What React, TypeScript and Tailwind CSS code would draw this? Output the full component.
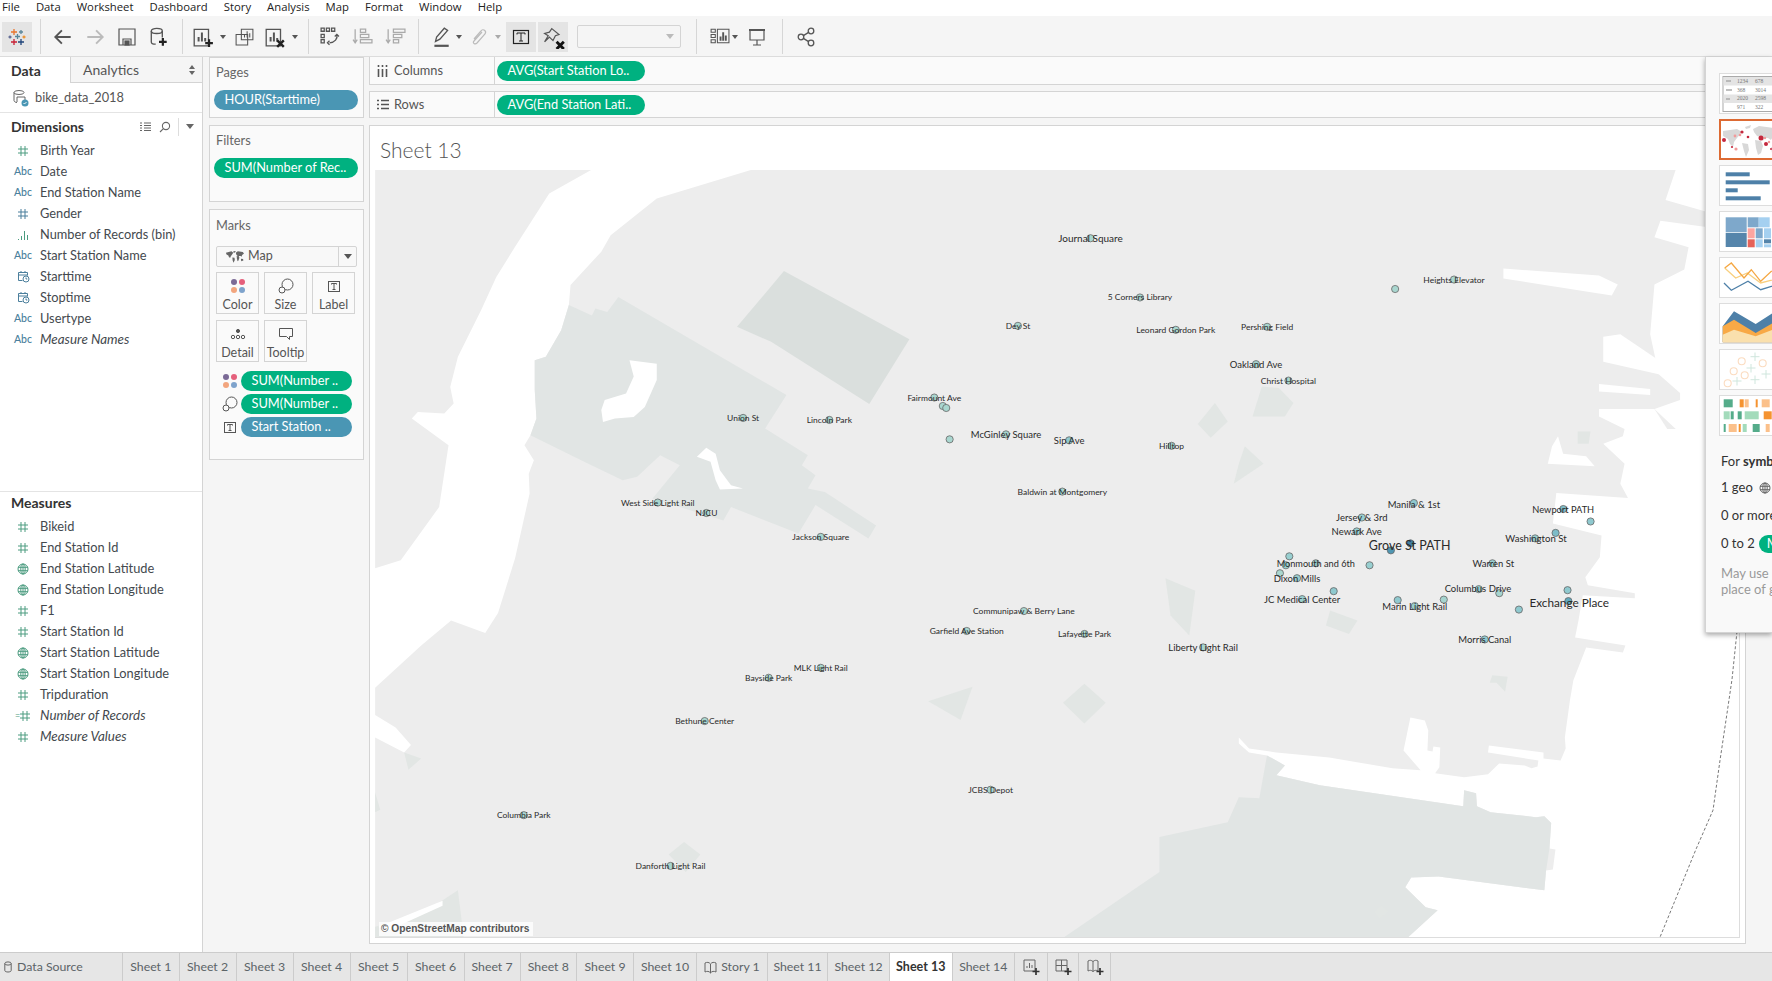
import React from "react";

const Z = (x: number) => -4 + x * 0.8547;
const Y = (y: number) => -6 + y * 0.4985;

const LAND = "6,9 260,9 210,57 170,164 148,225 130,292 103,385 94,446 98,479 87,499 56,496 49,509 92,563 81,687 36,794 6,810 6,1050 60,965 95,915 135,940 150,900 170,790 187,660 186,620 192,593 181,563 188,543 195,509 193,452 193,392 206,385 224,332 233,281 235,241 271,174 282,141 336,67 448,9 1530,9 1518,70 1568,95 1568,125 1512,112 1505,145 1545,165 1540,210 1505,240 1500,340 1510,420 1535,458 1535,472 1505,490 1530,530 1470,530 1468,545 1445,560 1470,600 1465,640 1474,669 1390,659 1386,720 1443,744 1441,788 1424,828 1427,844 1482,860 1482,870 1421,864 1416,915 1412,949 1471,965 1468,979 1425,969 1410,1035 1406,1075 1400,1150 1401,1172 1395,1196 1375,1192 1375,1180 1311,1166 1310,1180 1369,1196 1368,1208 1361,1212 1353,1206 1323,1202 1310,1224 1282,1230 1248,1222 1253,1210 1254,1170 1246,1168 1245,1178 1239,1176 1240,1136 1236,1116 1219,1110 1211,1176 1231,1216 1198,1212 1124,1190 1062,1180 1030,1172 1018,1150 1018,1162 1030,1180 1051,1186 1072,1206 1062,1226 1113,1246 1281,1288 1282,1256 1296,1262 1297,1288 1313,1300 1366,1310 1376,1308 1384,1322 1382,1373 1389,1375 1386,1415 1378,1417 1376,1457 1252,1429 1220,1431 1213,1451 1237,1491 1251,1497 1214,1555 6,1555 6,1150 40,1180 48,1165 30,1130 6,1105";
const SOUTH_PARK = "1051,1186 1072,1206 1062,1226 1113,1246 1281,1288 1282,1256 1296,1262 1297,1288 1313,1300 1366,1310 1376,1308 1384,1322 1382,1373 1378,1417 1376,1457 1252,1429 1220,1431 1213,1451 1237,1491 1251,1497 1214,1555 810,1555 925,1420 925,1350 1005,1320 1018,1270 1042,1272";
const BIG_PARK = "291,265 488,462 463,529 513,583 506,603 522,623 513,650 533,657 593,724 584,750 522,683 502,740 423,687 414,714 331,670 363,603 340,583 313,626 296,633 251,596 188,543 195,509 193,452 193,392 206,385 224,332 233,281 260,302 264,288 278,295";
const RAIL_PARK = "485,213 632,350 585,480 470,355 430,325";
const PARKS = [
  "1065,448 1082,478 1072,505 1034,505 1045,445",
  "990,478 1005,515 985,548 970,520",
  "1025,565 1047,600 1012,640 1018,600",
  "932,830 967,855 960,945 938,905",
  "1125,895 1157,915 1147,942 1120,925",
  "654,1077 706,1048 692,1115",
  "837,1042 862,1080 837,1122 812,1080",
  "1315,1025 1333,1028 1330,1058 1320,1040 1312,1040",
  "368,1360 387,1385 370,1420 350,1385",
  "40,1180 60,1192 45,1215",
  "1185,1488 1193,1500 1183,1513 1177,1500",
  "6,1260 12,1295 6,1300",
  "60,1505 103,1457 110,1555 6,1555 6,1530",
  "1415,535 1430,535 1428,560 1415,560",
];
const WATER = [
  "304,392 336,399 336,432 322,486 309,506 287,509 273,516 271,492 275,472 300,459 309,425",
  "394,568 405,580 410,613 423,643 437,650 410,652 405,633 399,596 383,586",
  "10,1530 85,1478 85,1488 18,1540",
  "1385,565 1392,545 1398,580 1425,585 1435,605 1380,600",
  "1328,208 1440,222 1462,240 1455,262 1328,228",
  "1445,345 1465,340 1530,415 1510,420 1445,395",
  "1440,440 1500,450 1500,462 1440,455",
  "1440,490 1505,490 1520,530 1470,530 1440,505",
];

const LABELS: [string, number, number, number][] = [
  ["Journal Square", 843, 149, 10],
  ["Heights Elevator", 1269, 232, 8.5],
  ["5 Corners Library", 901, 268, 8.5],
  ["Dey St", 758, 325, 8.5],
  ["Leonard Gordon Park", 943, 333, 8.5],
  ["Pershing Field", 1050, 327, 8.5],
  ["Oakland Ave", 1037, 402, 9.5],
  ["Christ Hospital", 1075, 435, 8.5],
  ["Fairmount Ave", 660, 469, 8.5],
  ["Union St", 436, 510, 8.5],
  ["Lincoln Park", 537, 514, 8.5],
  ["McGinley Square", 744, 543, 9.5],
  ["Sip Ave", 818, 555, 9.5],
  ["Hilltop", 938, 566, 8.5],
  ["Baldwin at Montgomery", 810, 658, 8.5],
  ["West Side Light Rail", 336, 680, 8.5],
  ["NJCU", 393, 701, 8.5],
  ["Jackson Square", 527, 749, 8.5],
  ["Manila & 1st", 1222, 684, 9.5],
  ["Jersey & 3rd", 1161, 710, 9.5],
  ["Newark Ave", 1155, 738, 9.5],
  ["Grove St PATH", 1217, 766, 12.5],
  ["Newport PATH", 1397, 693, 9.3],
  ["Washington St", 1365, 752, 9.6],
  ["Monmouth and 6th", 1107, 802, 9.2],
  ["Warren St", 1315, 802, 9.5],
  ["Dixon Mills", 1085, 832, 9.5],
  ["Columbus Drive", 1297, 852, 9.5],
  ["JC Medical Center", 1091, 874, 9.5],
  ["Marin Light Rail", 1223, 889, 9.5],
  ["Exchange Place", 1404, 880, 11.8],
  ["Communipaw & Berry Lane", 765, 898, 8.5],
  ["Garfield Ave Station", 698, 938, 8.5],
  ["Lafayette Park", 836, 944, 8.5],
  ["Liberty Light Rail", 975, 971, 9.5],
  ["Morris Canal", 1305, 955, 9.5],
  ["MLK Light Rail", 527, 1012, 8.5],
  ["Bayside Park", 466, 1032, 8.5],
  ["Bethune Center", 391, 1119, 8.5],
  ["JCBS Depot", 726, 1257, 8.5],
  ["Columbia Park", 179, 1308, 8.5],
  ["Danforth Light Rail", 351, 1410, 8.5],
];

const DOTS: [number, number, string][] = [
  [843,149,"#a9d6cf"],[1269,232,"#a9d6cf"],[1200,251,"#a9d6cf"],[901,268,"#a9d6cf"],[758,325,"#a9d6cf"],[943,333,"#a9d6cf"],[1050,327,"#a9d6cf"],[1037,402,"#a5d4cf"],[1075,435,"#a9d6cf"],[660,469,"#a9d6cf"],[670,486,"#a9d6cf"],[674,490,"#a9d6cf"],[678,553,"#a9d6cf"],[436,510,"#a9d6cf"],[537,514,"#a9d6cf"],[744,543,"#a5d4cf"],[818,555,"#8fc9cf"],[938,566,"#a9d6cf"],[810,658,"#a9d6cf"],[336,680,"#a9d6cf"],[393,701,"#a9d6cf"],[527,749,"#a9d6cf"],
  [1076,788,"#98cfd0"],[1072,806,"#98cfd0"],[1107,802,"#98cfd0"],[1065,822,"#a9d6cf"],[1085,832,"#98cfd0"],[1128,858,"#8fc9cf"],[1091,874,"#98cfd0"],[1170,806,"#98cfd0"],[1195,776,"#4f97b3"],[1218,762,"#3f7ea2"],[1155,738,"#98cfd0"],[1161,710,"#98cfd0"],[1222,681,"#8fc9cf"],[1203,876,"#8fc9cf"],[1223,888,"#98cfd0"],[1257,875,"#a5d4cf"],[1298,854,"#98cfd0"],[1322,862,"#a5d4cf"],[1345,895,"#8fc9cf"],[1402,856,"#8fc9cf"],[1403,878,"#5fa8bc"],[1314,802,"#98cfd0"],[1305,955,"#8fc9cf"],[1364,752,"#98cfd0"],[1388,741,"#7dbcc8"],[1429,718,"#8fc9cf"],[1397,693,"#7dbcc8"],
  [975,971,"#a9d6cf"],[836,944,"#a9d6cf"],[698,938,"#a9d6cf"],[765,898,"#a9d6cf"],[527,1012,"#a9d6cf"],[466,1032,"#a9d6cf"],[391,1119,"#a9d6cf"],[726,1257,"#a9d6cf"],[179,1308,"#a9d6cf"],[351,1410,"#a9d6cf"],
];

const Hash = ({ c = "#4c9c80" }: { c?: string }) => (
  <svg width="12" height="12" viewBox="0 0 12 12" fill="none" stroke={c} strokeWidth="1">
    <path d="M4 1v10M8 1v10M1 4h10M1 8h10" />
  </svg>
);
const Globe = ({ c = "#4c9c80" }: { c?: string }) => (
  <svg width="12" height="12" viewBox="0 0 12 12" fill="none" stroke={c} strokeWidth="1">
    <circle cx="6" cy="6" r="5" /><ellipse cx="6" cy="6" rx="2.2" ry="5" /><path d="M1 4.300h10M1 7.700h10M6 1v10" />
  </svg>
);
const Abc = () => <span className="text-[10.5px] font-medium text-[#4b7f9c] leading-none">Abc</span>;
const Cal = () => (
  <svg width="13" height="13" viewBox="0 0 13 13" fill="none" stroke="#4b7f9c" strokeWidth="1">
    <path d="M1.500 2.500h9v3M1.500 2.500v8h4M1.500 5h9M4 1v2M8 1v2" /><circle cx="9" cy="9" r="3" /><path d="M9 7.500V9h1.300" />
  </svg>
);
const Bins = () => (
  <svg width="13" height="12" viewBox="0 0 13 12" fill="none" stroke="#4c9c80" strokeWidth="1">
    <path d="M1.500 10v1M4.500 7v4M7.500 2v9M10.500 6v5" />
  </svg>
);
const CalcHash = () => (
  <span className="flex items-center"><span className="text-[9px] leading-none text-[#4c9c80] mr-[-1px]">=</span><Hash /></span>
);

const DIMS: [React.ReactNode, string, boolean?][] = [
  [<Hash />, "Birth Year"],
  [<Abc />, "Date"],
  [<Abc />, "End Station Name"],
  [<Hash c="#4b7f9c" />, "Gender"],
  [<Bins />, "Number of Records (bin)"],
  [<Abc />, "Start Station Name"],
  [<Cal />, "Starttime"],
  [<Cal />, "Stoptime"],
  [<Abc />, "Usertype"],
  [<Abc />, "Measure Names", true],
];
const MEAS: [React.ReactNode, string, boolean?][] = [
  [<Hash />, "Bikeid"],
  [<Hash />, "End Station Id"],
  [<Globe />, "End Station Latitude"],
  [<Globe />, "End Station Longitude"],
  [<Hash />, "F1"],
  [<Hash />, "Start Station Id"],
  [<Globe />, "Start Station Latitude"],
  [<Globe />, "Start Station Longitude"],
  [<Hash />, "Tripduration"],
  [<CalcHash />, "Number of Records", true],
  [<Hash />, "Measure Values", true],
];

const Field = ({ icon, name, italic }: { icon: React.ReactNode; name: string; italic?: boolean }) => (
  <div className="flex items-center h-[21px]">
    <div className="w-[40px] pl-[10px] pr-[4px] flex justify-center">{icon}</div>
    <span className={"text-[#44494e] whitespace-nowrap " + (italic ? "italic text-[13.4px]" : "text-[12.8px]")}>{name}</span>
  </div>
);

const Pill = ({ text, blue, w }: { text: string; blue?: boolean; w: string }) => (
  <div className={"h-[20px] rounded-full flex items-center pl-[10.5px] text-[12.8px] text-white whitespace-nowrap " + w + " " + (blue ? "bg-[#4a96b4]" : "bg-[#00b180]")}>{text}</div>
);

const Dots = () => (
  <svg width="16" height="16" viewBox="0 0 16 16">
    <circle cx="4" cy="4" r="3" fill="#7b6a96" /><circle cx="12" cy="4" r="3" fill="#e5607c" />
    <circle cx="4" cy="12" r="3" fill="#f2a57e" /><circle cx="12" cy="12" r="3" fill="#7ea3cc" />
  </svg>
);
const SizeIc = () => (
  <svg width="16" height="16" viewBox="0 0 16 16" fill="#fafafa" stroke="#555" strokeWidth="1">
    <circle cx="9.500" cy="6.500" r="5.500" /><circle cx="4" cy="12" r="3" />
  </svg>
);
const LabelIc = () => (
  <svg width="14" height="14" viewBox="0 0 14 14" fill="none" stroke="#555" strokeWidth="1">
    <rect x="1.500" y="2.500" width="11" height="10" /><path d="M4.500 5.500v-1h5v1M7 4.500v6M5.500 10.500h3" />
  </svg>
);
const DetailIc = () => (
  <svg width="16" height="14" viewBox="0 0 16 14" fill="none" stroke="#555" strokeWidth="1">
    <circle cx="8" cy="4" r="1.600" fill="#555" /><circle cx="3" cy="10" r="1.700" /><circle cx="8" cy="10" r="1.700" /><circle cx="13" cy="10" r="1.700" />
  </svg>
);
const TipIc = () => (
  <svg width="16" height="14" viewBox="0 0 16 14" fill="none" stroke="#555" strokeWidth="1">
    <path d="M1.500 1.500h13v8h-3v3l-3-3h-7z" />
  </svg>
);

const MarkBtn = ({ icon, label }: { icon: React.ReactNode; label: string }) => (
  <div className="w-[43px] h-[42px] border border-[#d4d4d4] flex flex-col items-center pt-[5px] justify-between pb-[2px]">
    <div className="h-[16px] flex items-center">{icon}</div>
    <span className="text-[12.5px] leading-none text-[#555]">{label}</span>
  </div>
);

const WorldMini = () => (
  <svg width="19" height="14" viewBox="0 0 62 41" fill="#666">
    <path d="M3 7l18-5 6 5-5 7-3 4-2 5-4-2-2-5-6-4zM24 22l7 1 1 7-4 9-3-7zM27 2l8-1-2 5-5 1zM36 6l6-4 16 2 4 5-6 5-2 6-3-3-5 0-1 4-3-4-3-1-3-5z" />
    <path d="M38 17l7 1 2 5-3 9-3 2-2-8z" /><path d="M52 26l7 1 1 5-7 2z" />
  </svg>
);

const Thumb = ({ children, sel }: { children: React.ReactNode; sel?: boolean }) => (
  <div className={"w-[66px] h-[41px] shrink-0 bg-white " + (sel ? "border-[2px] border-[#dd6a33]" : "border border-[#dddddd]")}>
    <svg width="66" height="41" viewBox="0 0 66 41" className="block">{children}</svg>
  </div>
);

const Sep = ({ ml }: { ml: string }) => <div className={"w-px h-[35px] bg-[#d6d6d6] shrink-0 " + ml} />;
const Caret = ({ w, c = "#555" }: { w: string; c?: string }) => (
  <div className={"flex justify-center shrink-0 " + w}>
    <svg width="6" height="4" viewBox="0 0 6 4"><path d="M0 0h6L3 4z" fill={c} /></svg>
  </div>
);
const Cell = ({ w, children, tile }: { w: string; children: React.ReactNode; tile?: boolean }) => (
  <div className={"h-[30px] flex items-center justify-center shrink-0 " + w + (tile ? " bg-[#e4e4e4]" : "")}>{children}</div>
);
const I = ({ children, size = 20, s = "#555", sw = 1.2 }: { children: React.ReactNode; size?: number; s?: string; sw?: number }) => (
  <svg width={size} height={size} viewBox="0 0 20 20" fill="none" stroke={s} strokeWidth={sw}>{children}</svg>
);
const PlusK = ({ x = 12, y = 12 }: { x?: number; y?: number }) => (
  <path d={`M${x + 3.5} ${y}v7M${x} ${y + 3.5}h7`} stroke="#222" strokeWidth="2" />
);

const Logo = () => (
  <svg width="20" height="20" viewBox="0 0 20 20" fill="none" strokeWidth="1.300">
    <path d="M7 2v6M4 5h6" stroke="#e8762d" /><path d="M14 3v4M12 5h4" stroke="#5b879b" />
    <path d="M7 12v6M4 15h6" stroke="#c72035" /><path d="M14 12v6M11 15h6" stroke="#1f447a" />
    <path d="M10.500 7v5M8 9.500h5" stroke="#59879b" /><path d="M3 8.500v3M1.500 10h3" stroke="#5b6591" /><path d="M17 8.500v3M15.500 10h3" stroke="#eb912b" />
  </svg>
);

const TABS: [string, string][] = [
  ["Sheet 1", "w-[56.5px]"],["Sheet 2", "w-[57px]"],["Sheet 3", "w-[57px]"],["Sheet 4", "w-[57px]"],["Sheet 5", "w-[57px]"],["Sheet 6", "w-[57px]"],["Sheet 7", "w-[56px]"],["Sheet 8", "w-[56.5px]"],["Sheet 9", "w-[57px]"],["Sheet 10", "w-[63px]"],
];
const TABS2: [string, string][] = [["Sheet 11", "w-[60px]"],["Sheet 12", "w-[62px]"]];

const Tab = ({ t, w, active }: { t: React.ReactNode; w: string; active?: boolean }) => (
  <div className={"h-full shrink-0 flex items-center justify-center whitespace-nowrap border-r border-[#cccccc] " + w + (active ? " bg-white font-bold text-[#333] text-[12.5px]" : " text-[#5c6468] text-[12.3px]")}>{t}</div>
);

export default function App() {
  return (
    <div className="relative w-[1772px] h-[981px] overflow-hidden flex flex-col bg-[#f5f5f5] font-['Lato','Open_Sans',sans-serif] text-[#555]">
      {/* Menu */}
      <div className="h-[16px] pb-[2px] bg-white flex items-center pl-[2px] gap-[16px] text-[11.3px] leading-none text-[#222] font-['Open_Sans',sans-serif] shrink-0">
        {["File","Data","Worksheet","Dashboard","Story","Analysis","Map","Format","Window","Help"].map((m) => <span key={m}>{m}</span>)}
      </div>

      {/* Toolbar */}
      <div className="h-[41px] shrink-0 flex items-center pl-[2px] pt-[1px] bg-[#f5f5f5] border-b border-[#dcdcdc]">
        <Cell w="w-[30px]" tile><Logo /></Cell>
        <Sep ml="ml-[8px]" />
        <Cell w="w-[32px] ml-[6px]"><I size={22} sw={1.7}><path d="M17 10H3M9 4l-6 6 6 6" /></I></Cell>
        <Cell w="w-[32px]"><I size={22} s="#bbb" sw={1.7}><path d="M3 10h14M11 4l6 6-6 6" /></I></Cell>
        <Cell w="w-[32px]"><I size={20}><path d="M2 2h16v16H2zM6 18v-6h8v6" /><rect x="8" y="14" width="4" height="4" fill="#555" /></I></Cell>
        <Cell w="w-[32px]"><I size={22}><ellipse cx="8" cy="4.500" rx="5" ry="2.300" /><path d="M3 4.500v10c0 1 1.500 2 4 2M13 4.500v6" /><PlusK x={10} y={11} /></I></Cell>
        <Sep ml="ml-[7px]" />
        <Cell w="w-[30px] ml-[5px]"><I size={22}><path d="M2 3h13v15H2z" /><path d="M6 14v-4M9 14V6M12 14v-3" strokeWidth="1.800" /><PlusK x={12} y={12} /></I></Cell>
        <Caret w="w-[10px]" />
        <Cell w="w-[30px] ml-px"><I size={21} sw={1}><path d="M7 3h11v10H7zM2 8h11v10H2z" fill="#f5f5f5" /><path d="M10 11V8M12.500 11V5M15 11V7" /></I></Cell>
        <Cell w="w-[30px] ml-[1px]"><I size={22}><path d="M2 3h13v15H2z" /><path d="M6 14v-4M9 14V6M12 14v-3" strokeWidth="1.800" /><path d="M12 13l6 6M18 13l-6 6" stroke="#222" strokeWidth="2.200" /></I></Cell>
        <Caret w="w-[10px]" />
        <Sep ml="ml-[8px]" />
        <Cell w="w-[30px] ml-[5px]"><I size={21}><path d="M2 2h3v3H2zM7 2h3v3H7zM12 2h3v3h-3zM2 8h3v3H2zM2 13h3v3H2z" /><path d="M17 8c1 4-2 8-7 8M10 14l-2 2 2 2M15 10l2-2 2 2" /></I></Cell>
        <Cell w="w-[30px] ml-[3px]"><I size={21} s="#aaa"><path d="M3 3v12M1 13l2 3 2-3" /><path d="M8 3h5v3H8zM8 8h8v3H8zM8 13h11v3H8z" /></I></Cell>
        <Cell w="w-[30px] ml-[3px]"><I size={21} s="#aaa"><path d="M3 3v12M1 13l2 3 2-3" /><path d="M8 3h11v3H8zM8 8h8v3H8zM8 13h5v3H8z" /></I></Cell>
        <Sep ml="ml-[8px]" />
        <Cell w="w-[30px] ml-[7px]"><I size={22}><path d="M5 14l1-4 7-8 3 2-7 8z" /><path d="M4 18h13" strokeWidth="2" /></I></Cell>
        <Caret w="w-[6px]" />
        <Cell w="w-[30px] ml-[1px]"><I size={20} s="#bbb"><path d="M14 5l-8 9c-2 2 1 4 3 2l8-9c2-3-2-6-4-3l-7 8" /></I></Cell>
        <Caret w="w-[10px]" c="#aaa" />
        <Cell w="w-[30px] ml-[3px]" tile><I size={20} sw={1} s="#222"><rect x="2.500" y="3.500" width="15" height="13" strokeWidth="1.200" /><path d="M6 7.500V6h8v1.500M10 6v8M8 14h4" /></I></Cell>
        <Cell w="w-[30px] ml-[2px]" tile><I size={24} sw={1}><path d="M9 3l6 5-3 1-2 4-3-3-4 4 3-5-3-2 4-1z" /><path d="M13 14l6 6M19 14l-6 6" stroke="#111" strokeWidth="2.400" /></I></Cell>
        <div className="w-[104px] h-[23px] ml-[9px] shrink-0 rounded-[2px] border border-[#d4d4d4] flex items-center justify-end pr-[6px]">
          <svg width="8" height="5" viewBox="0 0 8 5"><path d="M0 0h8L4 5z" fill="#bbb" /></svg>
        </div>
        <Sep ml="ml-[15px]" />
        <Cell w="w-[26px] ml-[9px]"><I size={21} sw={1}><path d="M2 3h4v3H2zM2 8h4v3H2zM2 13h4v3H2zM8 3h11v13H8z" /><path d="M11 14v-4M13.500 14V6M16 14V9" strokeWidth="1.800" /></I></Cell>
        <Caret w="w-[6px]" />
        <Cell w="w-[26px] ml-[6px]"><I size={20}><path d="M2 3h16" strokeWidth="2" /><path d="M3 3v10h14V3M10 13v5M6 18h8" /></I></Cell>
        <Sep ml="ml-[12px]" />
        <Cell w="w-[26px] ml-[10px]"><I size={20} sw={1.300}><circle cx="5" cy="10" r="2.800" /><circle cx="15" cy="4" r="2.800" /><circle cx="15" cy="16" r="2.800" /><path d="M7.400 8.600l5.200-3.200M7.400 11.400l5.200 3.200" /></I></Cell>
      </div>

      {/* Main */}
      <div className="flex-1 flex min-h-0">
        {/* Data pane */}
        <div className="w-[203px] shrink-0 bg-white border-r border-[#d4d4d4] flex flex-col">
          <div className="h-[26px] flex shrink-0">
            <div className="w-[71px] flex items-center pl-[11px] text-[14px] font-bold text-[#333] border-r border-[#d4d4d4]">Data</div>
            <div className="flex-1 flex items-center justify-between pl-[12px] pr-[7px] text-[14px] bg-[#f5f5f5] border-b border-[#d4d4d4] text-[#555]">
              <span>Analytics</span>
              <svg width="6" height="10" viewBox="0 0 6 10" fill="#666"><path d="M3 0l3 4H0zM3 10L0 6h6z" /></svg>
            </div>
          </div>
          <div className="h-[30px] shrink-0 flex items-center pl-[13px] border-b border-[#e4e4e4] text-[12.8px] text-[#555]">
            <svg width="16" height="18" viewBox="0 0 16 18" fill="none" stroke="#555" strokeWidth="0.900" className="mr-[6px]">
              <ellipse cx="6" cy="3.500" rx="5" ry="2" /><path d="M1 3.500v8c0 1 1.500 2 3 2M4 8h8v3M4 8v5" /><circle cx="12" cy="14" r="3.500" fill="#4a96b4" stroke="none" /><path d="M10.500 14l1 1 2-2" stroke="#fff" />
            </svg>
            bike_data_2018
          </div>
          <div className="h-[379px] shrink-0 border-b border-[#e4e4e4]">
            <div className="h-[27px] flex items-center pl-[11px] pr-[8px]">
              <span className="text-[14px] font-bold text-[#333]">Dimensions</span>
              <div className="ml-auto flex items-center">
                <svg width="13" height="10" viewBox="0 0 13 10" stroke="#666" strokeWidth="1" fill="none"><path d="M1 1h2M1 3.500h2M1 6h2M1 8.500h2M5 1h7M5 3.500h7M5 6h7M5 8.500h7" /></svg>
                <svg width="12" height="12" viewBox="0 0 12 12" stroke="#666" strokeWidth="1.100" fill="none" className="ml-[7px]"><circle cx="7" cy="5" r="3.600" /><path d="M4.400 7.600L1 11" /></svg>
                <div className="w-px h-[18px] bg-[#ddd] ml-[7px] mr-[7px]" />
                <svg width="8" height="5" viewBox="0 0 8 5"><path d="M0 0h8L4 5z" fill="#666" /></svg>
              </div>
            </div>
            {DIMS.map(([ic, n, it]) => <Field key={n} icon={ic} name={n} italic={it} />)}
          </div>
          <div className="h-[24px] pb-[3px] flex items-center pl-[11px] text-[14px] font-bold text-[#333]">Measures</div>
          {MEAS.map(([ic, n, it]) => <Field key={n} icon={ic} name={n} italic={it} />)}
        </div>

        {/* Cards column */}
        <div className="w-[166px] shrink-0 pl-[6px] pr-[5px] flex flex-col gap-[7px]">
          <div className="h-[61px] border border-[#d4d4d4] bg-[#fafafa] px-[4px]">
            <div className="text-[12.8px] h-[32px] pb-[3px] flex items-center pl-[2px] text-[#666]">Pages</div>
            <Pill text="HOUR(Starttime)" blue w="w-[144px]" />
          </div>
          <div className="h-[77px] border border-[#d4d4d4] bg-[#fafafa] px-[4px]">
            <div className="text-[12.8px] h-[32px] pb-[3px] flex items-center pl-[2px] text-[#666]">Filters</div>
            <Pill text="SUM(Number of Rec.." w="w-[144px]" />
          </div>
          <div className="h-[251px] border border-[#d4d4d4] bg-[#fafafa] px-[6px]">
            <div className="text-[12.8px] h-[36px] pb-[4px] flex items-center text-[#666]">Marks</div>
            <div className="h-[21px] border border-[#d4d4d4] rounded-[2px] flex items-center bg-[#f8f8f8]">
              <div className="pl-[8px] flex items-center gap-[4px] flex-1 text-[12.5px]"><WorldMini /> Map</div>
              <div className="w-[18px] h-full border-l border-[#d4d4d4] flex items-center justify-center">
                <svg width="8" height="5" viewBox="0 0 8 5"><path d="M0 0h8L4 5z" fill="#555" /></svg>
              </div>
            </div>
            <div className="mt-[5px] flex gap-[5px]">
              <MarkBtn icon={<Dots />} label="Color" />
              <MarkBtn icon={<SizeIc />} label="Size" />
              <MarkBtn icon={<LabelIc />} label="Label" />
            </div>
            <div className="mt-[6px] flex gap-[5px]">
              <MarkBtn icon={<DetailIc />} label="Detail" />
              <MarkBtn icon={<TipIc />} label="Tooltip" />
            </div>
            <div className="mt-[9px] flex flex-col gap-[3px]">
              <div className="flex items-center gap-[3px] pl-[6px]"><Dots /><Pill text="SUM(Number .." w="w-[111px]" /></div>
              <div className="flex items-center gap-[3px] pl-[6px]"><SizeIc /><Pill text="SUM(Number .." w="w-[111px]" /></div>
              <div className="flex items-center gap-[3px] pl-[6px]"><div className="w-[16px] flex justify-center"><LabelIc /></div><Pill text="Start Station .." blue w="w-[111px]" /></div>
            </div>
          </div>
        </div>

        {/* Right */}
        <div className="flex-1 min-w-0 pr-[26px] flex flex-col">
          <div className="h-[28px] shrink-0 flex items-center border border-t-0 border-[#d4d4d4] bg-[#fafafa]">
            <div className="w-[125px] h-full flex items-center border-r border-[#d4d4d4] pl-[7px] text-[12.8px]">
              <svg width="11" height="12" viewBox="0 0 11 12" stroke="#555" strokeWidth="1.600" className="mr-[6px]"><path d="M1.500 0v2M1.500 4v8M5.500 0v2M5.500 4v8M9.500 0v2M9.500 4v8" /></svg>
              Columns
            </div>
            <div className="pl-[2px]"><Pill text="AVG(Start Station Lo.." w="w-[148px]" /></div>
          </div>
          <div className="h-[27px] shrink-0 mt-[6px] flex items-center border border-[#d4d4d4] bg-[#fafafa]">
            <div className="w-[125px] h-full flex items-center border-r border-[#d4d4d4] pl-[7px] text-[12.8px]">
              <svg width="12" height="11" viewBox="0 0 12 11" stroke="#555" strokeWidth="1.600" className="mr-[5px]"><path d="M0 1.500h2M4 1.500h8M0 5.500h2M4 5.500h8M0 9.500h2M4 9.500h8" /></svg>
              Rows
            </div>
            <div className="pl-[2px]"><Pill text="AVG(End Station Lati.." w="w-[148px]" /></div>
          </div>
          <div className="h-[819px] shrink-0 mt-[7px] border border-[#d4d4d4] bg-white px-[5px] pb-[5px] flex flex-col">
            <div className="h-[44px] shrink-0 flex items-center pl-[5px] pt-[4px] text-[21px] font-light text-[#555]">Sheet 13</div>
            <div className="relative flex-1 min-h-0 border-r border-b border-[#dddddd]">
              <svg viewBox="0 0 1366 768" className="absolute inset-0 w-full h-full block font-['Lato',sans-serif]">
                <g transform="translate(-5 -5) scale(0.8547 0.4985)">
                  <polygon points={LAND} fill="#ededed" />
                  <polygon points={BIG_PARK} fill="#e1e5e4" />
                  <polygon points={SOUTH_PARK} fill="#e1e5e4" />
                  <polygon points={RAIL_PARK} fill="#dadfdd" />
                  {PARKS.map((p) => <polygon key={p} points={p} fill="#e2e6e4" />)}
                  {WATER.map((p) => <polygon key={p} points={p} fill="#ffffff" />)}
                </g>
                <polyline points="1364,462 1359,510 1354,544 1347,591 1340,641 1323,680 1287,768" fill="none" stroke="#777" strokeWidth="1" strokeDasharray="3 2" />
                {DOTS.map(([x, y, c], i) => (
                  <circle key={i} cx={Z(x)} cy={Y(y)} r="3.600" fill={c} stroke="#666" strokeWidth="0.800" />
                ))}
                {LABELS.map(([t, x, y, s]) => (
                  <text key={t} x={Z(x)} y={Y(y)} fontSize={s} textAnchor="middle" dominantBaseline="central" fill="#2a2a2a">{t}</text>
                ))}
              </svg>
              <div className="absolute left-[4px] bottom-[1px] h-[14px] px-[2px] w-[154px] flex items-center bg-white/80 text-[10.2px] font-bold leading-none text-[#555] font-['Liberation_Sans',sans-serif] whitespace-nowrap">© OpenStreetMap contributors</div>
            </div>
          </div>
        </div>
      </div>

      {/* Tabs */}
      <div className="h-[29px] shrink-0 flex items-center bg-[#e6e6e6] border-t border-[#cccccc] w-full">
        <Tab w="w-[123px] !justify-start pl-[4px]" t={<span className="flex items-center gap-[5px]"><svg width="8" height="12" viewBox="0 0 8 12" fill="none" stroke="#666"><ellipse cx="4" cy="2.500" rx="3.200" ry="1.600" /><path d="M.8 2.500v7c0 2 6.400 2 6.400 0v-7" /></svg>Data Source</span>} />
        {TABS.map(([t, w]) => <Tab key={t} t={t} w={w} />)}
        <Tab w="w-[71px]" t={<span className="flex items-center gap-[4px]"><svg width="13" height="13" viewBox="0 0 13 13" fill="none" stroke="#666"><path d="M1 2c2-1 4-1 5.500 1C8 1 10 1 12 2v9c-2-1-4-1-5.500 1C5 10 3 10 1 11zM6.500 3v9" /></svg>Story 1</span>} />
        {TABS2.map(([t, w]) => <Tab key={t} t={t} w={w} />)}
        <Tab w="w-[62.5px]" active t="Sheet 13" />
        <Tab w="w-[62.5px]" t="Sheet 14" />
        <Tab w="w-[32.5px]" t={<svg width="18" height="18" viewBox="0 0 18 18" fill="none" stroke="#666"><path d="M2 2h11v11H2z" /><path d="M5 10V8M7.500 10V5M10 10V7" /><path d="M14 10v7M10.500 13.500h7" stroke="#333" strokeWidth="1.700" /></svg>} />
        <Tab w="w-[31.5px]" t={<svg width="18" height="18" viewBox="0 0 18 18" fill="none" stroke="#666"><path d="M2 2h11v11H2zM2 7.500h11M7.500 2v11" /><path d="M14 10v7M10.500 13.500h7" stroke="#333" strokeWidth="1.700" /></svg>} />
        <Tab w="w-[32px]" t={<svg width="18" height="18" viewBox="0 0 18 18" fill="none" stroke="#666"><path d="M2 3c2-1 3-1 5 .5C9 2 10 2 12 3v10c-2-1-3-1-5 .5C5 12 4 12 2 13zM7 3.500v10" /><path d="M14 10v7M10.500 13.500h7" stroke="#333" strokeWidth="1.700" /></svg>} />
      </div>

      {/* Show Me overlay */}
      <div className="absolute left-[1705px] top-[57px] w-[67px] h-[576px] overflow-hidden bg-[#f9f9f9] border-l border-b border-[#d4d4d4] shadow-[0_2px_5px_rgba(0,0,0,0.35)] pl-[13px] pt-[16px]">
        <div className="flex flex-col gap-[5px]">
          <Thumb>
            <rect x="3" y="2.500" width="60" height="35" fill="#fff" stroke="#aaa" />
            <rect x="3.500" y="3" width="60" height="8.500" fill="#e4e4e4" /><rect x="3.500" y="20.500" width="60" height="8.500" fill="#e4e4e4" />
            <path d="M6 7h5M6 16h6M6 25h4" stroke="#aaa" strokeWidth="1.600" />
            <g fontSize="5.500" fill="#777" fontFamily="Liberation Serif, serif">
              <text x="17" y="9">1234</text><text x="35" y="9">678</text>
              <text x="17" y="17.500">368</text><text x="35" y="17.500">3014</text>
              <text x="17" y="26">2020</text><text x="35" y="26">2598</text>
              <text x="17" y="35">971</text><text x="35" y="35">322</text>
            </g>
          </Thumb>
          <Thumb sel>
            <path d="M2 10l14-2 5 3-5 6-3 4-1 5-3-3-2-5-5-3zM21 22l6 1 1 6-3 7-2-6zM24 6l6-2-1 3-4 1zM32 8l6-3 14 2 6 4-5 3-3 5-3-2-4 0-1 3-3-4-3-1-3-4zM34 19l6 1 2 5-2 7-3 2-2-7zM50 26l6 1 1 4-6 1z" fill="#d8d8d8" />
            <g fill="#c5283d"><circle cx="3" cy="19" r="2" /><circle cx="21" cy="11" r="1.600" /><circle cx="40" cy="17" r="2.500" /><circle cx="27" cy="16" r="1.300" /><circle cx="11" cy="26" r="1.100" /><circle cx="45" cy="23" r="2" /><circle cx="50" cy="28" r="1" /></g>
            <g fill="#f29a9a"><circle cx="14" cy="15" r="1.400" /><circle cx="15" cy="28" r="1.600" /><circle cx="19" cy="14" r="1.300" /><circle cx="44" cy="17" r="1.200" /><circle cx="48" cy="21" r="1.200" /></g>
          </Thumb>
          <Thumb>
            <g fill="#4e80a8"><rect x="5.700" y="6.300" width="24" height="4" /><rect x="5.700" y="14.300" width="44" height="4" /><rect x="5.700" y="22.300" width="12" height="4" /><rect x="5.700" y="30.300" width="35" height="4" /></g>
          </Thumb>
          <Thumb>
            <rect x="5.700" y="5.300" width="21" height="15" fill="#7ea8cb" /><rect x="5.700" y="21" width="21" height="14" fill="#5585ab" />
            <rect x="27.700" y="5.300" width="11" height="10" fill="#7ea8cb" /><rect x="38.700" y="5.300" width="11" height="10" fill="#a5d0f0" />
            <rect x="27.700" y="16.300" width="7" height="10" fill="#fca5a0" /><rect x="27.700" y="27.300" width="7" height="8" fill="#e5635a" />
            <rect x="35.700" y="16.300" width="7" height="10" fill="#7ea8cb" /><rect x="35.700" y="27.300" width="7" height="8" fill="#a5d0f0" />
            <rect x="44" y="16.300" width="7" height="10" fill="#a5d0f0" /><rect x="44" y="27.300" width="7" height="4" fill="#5585ab" /><rect x="44" y="32.300" width="7" height="3" fill="#a5d0f0" />
          </Thumb>
          <Thumb>
            <g fill="none" strokeWidth="1.300">
              <polyline points="4.700,10 15.700,20 27.300,15 40.700,25 50.700,22.300 66,20" stroke="#f8cf7f" />
              <polyline points="4.700,10 11.300,5 24,20 31.300,11.700 40.700,23.300 51.300,13.300 66,11" stroke="#f5a742" />
              <polyline points="4,25 11.300,32.300 28,23.300 40.700,31.700 51.300,28.300 66,30" stroke="#4e80a8" />
            </g>
          </Thumb>
          <Thumb>
            <polygon points="2.700,22.300 14,7.300 35.700,20 52.700,9 66,16 66,38.300 2.700,38.300" fill="#4e80a8" />
            <polygon points="2.700,22.300 14,15.700 35.700,29 52.700,19 66,24 66,38.300 2.700,38.300" fill="#f8a946" />
            <polygon points="2.700,30.700 14,25.700 35.700,32.300 52.700,25.700 66,30 66,38.300 2.700,38.300" fill="#fae0ad" />
          </Thumb>
          <Thumb>
            <g fill="none" stroke="#fbdcc0" strokeWidth="1.100"><circle cx="21.700" cy="11.300" r="3.500" /><circle cx="13.700" cy="21.300" r="3.500" /><circle cx="24.700" cy="25.300" r="3.500" /><circle cx="7.700" cy="33.300" r="3.500" /><circle cx="42.700" cy="13.300" r="3.500" /></g>
            <path d="M35 2.500v8.500M30.500 6.700h9M31 14v8.500M26.500 18h9M46 20v8.500M41.500 24h9M35 25.500v8.500M30.500 29.700h9M17 27v8.500M12.500 31h9" stroke="#cfe6dd" strokeWidth="1" fill="none" />
          </Thumb>
          <Thumb>
            <g fill="#55ac8a"><rect x="3.700" y="3.300" width="9" height="8" /><rect x="10.700" y="15.300" width="3" height="8" /><rect x="17.700" y="15.300" width="4" height="8" /><rect x="3.700" y="28" width="2" height="8" /><rect x="32.700" y="28" width="7" height="8" /></g>
            <g fill="#f59330"><rect x="19.700" y="3.300" width="4" height="8" /><rect x="35.700" y="3.300" width="2" height="8" /><rect x="43.700" y="15.300" width="8" height="8" /><rect x="18.700" y="28" width="2" height="8" /></g>
            <g fill="#fbc08a"><rect x="24.700" y="3.300" width="4" height="8" /><rect x="41.700" y="3.300" width="8" height="8" /><rect x="8.700" y="28" width="8" height="8" /><rect x="45.700" y="28" width="4" height="8" /></g>
            <g fill="#a3dbbb"><rect x="3.700" y="15.300" width="6" height="8" /><rect x="24.700" y="15.300" width="14" height="8" /><rect x="22.700" y="28" width="4" height="8" /></g>
          </Thumb>
        </div>
        <div className="mt-[16px] ml-[2px] text-[13px] text-[#333] whitespace-nowrap flex flex-col">
          <div className="h-[20px] flex items-center">For&nbsp;<b>symbol maps try</b></div>
          <div className="h-[28px] mt-[2px] flex items-center gap-[6px]">1 geo <Globe c="#666" /></div>
          <div className="h-[28px] flex items-center">0 or more dimensions</div>
          <div className="h-[28px] flex items-center gap-[4px]">0 to 2 <span className="h-[18px] rounded-l-full bg-[#00b180] text-white pl-[8px] flex items-center">Measures</span></div>
          <div className="text-[#999] mt-[7px] leading-[16px]">May use state or<br />place of geo</div>
        </div>
      </div>
    </div>
  );
}
